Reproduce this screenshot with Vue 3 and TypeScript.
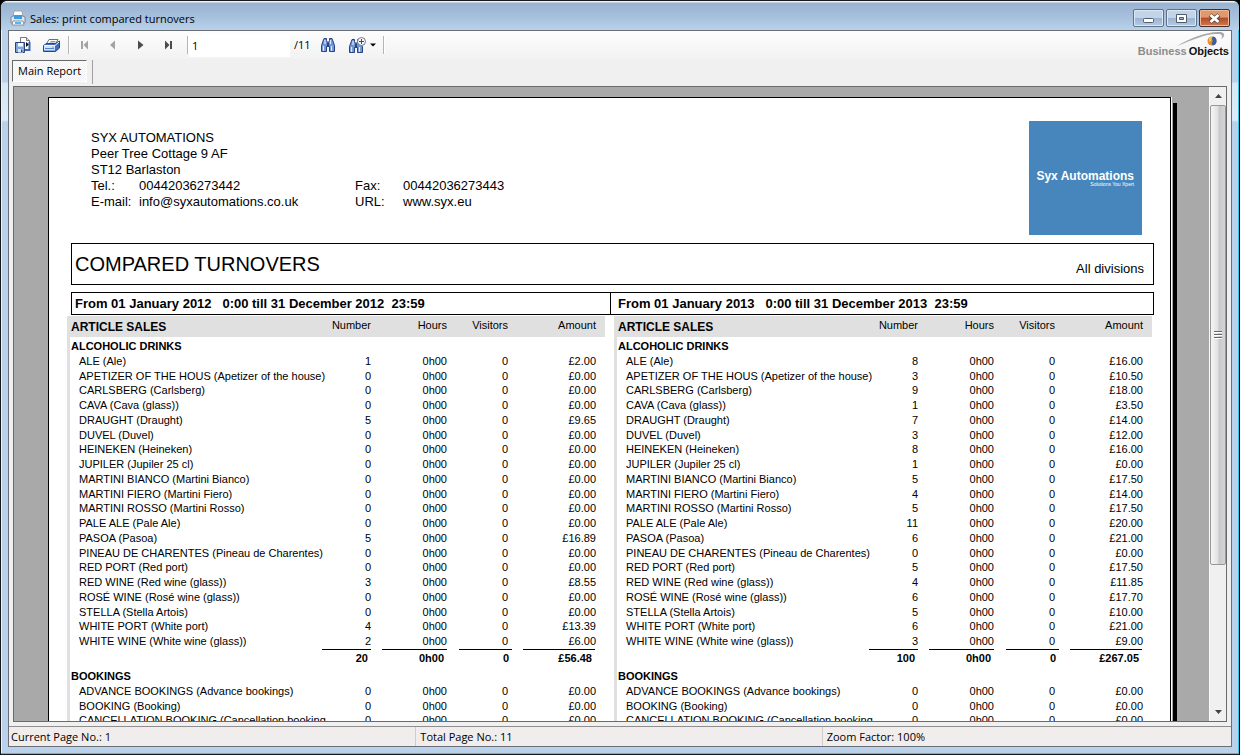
<script setup lang="ts">
import { ref } from 'vue'

interface Row { name: string; number: string; amount: string }
interface Group { title: string; rows: Row[]; total?: { number: string; amount: string } }
interface Period { label: string; groups: Group[] }

const articles: [string, string, string, string, string][] = [
  ['ALE (Ale)', '1', '£2.00', '8', '£16.00'],
  ['APETIZER OF THE HOUS (Apetizer of the house)', '0', '£0.00', '3', '£10.50'],
  ['CARLSBERG (Carlsberg)', '0', '£0.00', '9', '£18.00'],
  ['CAVA (Cava (glass))', '0', '£0.00', '1', '£3.50'],
  ['DRAUGHT (Draught)', '5', '£9.65', '7', '£14.00'],
  ['DUVEL (Duvel)', '0', '£0.00', '3', '£12.00'],
  ['HEINEKEN (Heineken)', '0', '£0.00', '8', '£16.00'],
  ['JUPILER (Jupiler 25 cl)', '0', '£0.00', '1', '£0.00'],
  ['MARTINI BIANCO (Martini Bianco)', '0', '£0.00', '5', '£17.50'],
  ['MARTINI FIERO (Martini Fiero)', '0', '£0.00', '4', '£14.00'],
  ['MARTINI ROSSO (Martini Rosso)', '0', '£0.00', '5', '£17.50'],
  ['PALE ALE (Pale Ale)', '0', '£0.00', '11', '£20.00'],
  ['PASOA (Pasoa)', '5', '£16.89', '6', '£21.00'],
  ['PINEAU DE CHARENTES (Pineau de Charentes)', '0', '£0.00', '0', '£0.00'],
  ['RED PORT (Red port)', '0', '£0.00', '5', '£17.50'],
  ['RED WINE (Red wine (glass))', '3', '£8.55', '4', '£11.85'],
  ['ROSÉ WINE (Rosé wine (glass))', '0', '£0.00', '6', '£17.70'],
  ['STELLA (Stella Artois)', '0', '£0.00', '5', '£10.00'],
  ['WHITE PORT (White port)', '4', '£13.39', '6', '£21.00'],
  ['WHITE WINE (White wine (glass))', '2', '£6.00', '3', '£9.00'],
]
const bookings = [
  'ADVANCE BOOKINGS (Advance bookings)',
  'BOOKING (Booking)',
  'CANCELLATION BOOKING (Cancellation booking',
]

function groupsFor(col: 1 | 3, total: { number: string; amount: string }): Group[] {
  return [
    {
      title: 'ALCOHOLIC DRINKS',
      rows: articles.map((a) => ({ name: a[0], number: a[col], amount: a[col + 1] as string })),
      total,
    },
    { title: 'BOOKINGS', rows: bookings.map((name) => ({ name, number: '0', amount: '£0.00' })) },
  ]
}

const periods: Period[] = [
  {
    label: 'From 01 January 2012   0:00 till 31 December 2012  23:59',
    groups: groupsFor(1, { number: '20', amount: '£56.48' }),
  },
  {
    label: 'From 01 January 2013   0:00 till 31 December 2013  23:59',
    groups: groupsFor(3, { number: '100', amount: '£267.05' }),
  },
]

const page = ref('1')
</script>

<template>
  <div class="window">
    <header class="titlebar">
      <svg class="app-icon" width="16" height="16" viewBox="0 0 16 16">
        <path d="M4 1h8l1 6H3z" fill="#fdfdfd" stroke="#9aa6b3" stroke-width="1" />
        <path d="M1 7l2-1h10l2 1v6H1z" fill="#dfe5ea" stroke="#7d8a97" />
        <path d="M4 5h8v4H4z" fill="#3e9be0" />
        <path d="M3 11h10l1 4H2z" fill="#f7fbff" stroke="#8796a5" />
        <path d="M5 13h6" stroke="#59b4ee" stroke-width="2" />
      </svg>
      <h1>Sales: print compared turnovers</h1>
      <div class="controls">
        <button type="button" aria-label="Minimize">
          <svg width="13" height="13"><rect x="1.5" y="6.5" width="10" height="4" rx="1" fill="#fff" stroke="#4f5c6b" /></svg>
        </button>
        <button type="button" aria-label="Maximize">
          <svg width="13" height="13"><path d="M1.500 2.500h10v8h-10zM4.500 5.500v2h4v-2z" fill="#fff" fill-rule="evenodd" stroke="#4f5c6b" /></svg>
        </button>
        <button type="button" class="close" aria-label="Close">
          <svg width="13" height="13"><path d="M2 3l9 7M11 3l-9 7" stroke="#5b4a4a" stroke-width="4.500" /><path d="M2.500 3l8 7M10.500 3l-8 7" stroke="#fff" stroke-width="2.800" /></svg>
        </button>
      </div>
    </header>

    <main class="client">
      <div class="toolbar">
        <button type="button" class="tool" aria-label="Export report">
          <svg width="16" height="16" viewBox="0 0 16 16">
            <path d="M5.500.5h6l3 3v9h-9z" fill="#fff" stroke="#777" />
            <path d="M11.500.5v3h3" fill="#ddd" stroke="#777" />
            <path d="M11 5l3 2.500-3 2.500z" fill="#111" />
            <path d="M14.500 5v8H9" fill="none" stroke="#3a67b5" stroke-width="2" />
            <path d="M.5 5.500h9v10h-9z" fill="#7ea6dc" stroke="#28447e" />
            <path d="M3 6h5v3.500H3z" fill="#fff" />
            <path d="M3 12h5v3.500H3z" fill="#dfe6f2" /><path d="M6 12.500h1.500V15H6z" fill="#28447e" />
          </svg>
        </button>
        <button type="button" class="tool" aria-label="Print report">
          <svg width="17" height="16" viewBox="0 0 17 16">
            <path d="M6 2.500h9l-3 5H3z" fill="#fff" stroke="#68707c" />
            <path d="M7.500 4.500h5M6.500 6h5" stroke="#8f98a5" />
            <path d="M.5 8.500l3-2h9l4-2.500v7l-4 3.500H.5z" fill="#3a6cc2" stroke="#27458a" />
            <path d="M1 8.500h11v5H1z" fill="#cfe2f8" />
            <path d="M1 8.500h11l4-3.500" stroke="#f3f8ff" fill="none" />
            <path d="M2 11.500h9" stroke="#5286d0" /><path d="M9 10h2" stroke="#e39a2d" />
          </svg>
        </button>
        <span class="sep narrow"></span>
        <button type="button" class="tool" aria-label="First page">
          <svg width="9" height="10"><path d="M1 1h2v8H1zM8 .5v9L3.500 5z" fill="#a3a3a3" /></svg>
        </button>
        <button type="button" class="tool" aria-label="Previous page">
          <svg width="9" height="10"><path d="M7 .5v9L2 5z" fill="#a3a3a3" /></svg>
        </button>
        <button type="button" class="tool" aria-label="Next page">
          <svg width="9" height="10"><path d="M2 .5v9L7.500 5z" fill="#4c4c4c" /></svg>
        </button>
        <button type="button" class="tool" aria-label="Last page">
          <svg width="9" height="10"><path d="M1 .5v9L5.500 5zM6 1h2v8H6z" fill="#4c4c4c" /></svg>
        </button>
        <span class="sep"></span>
        <input v-model="page" class="page-input" type="text" aria-label="Page number" />
        <span class="page-total">/11</span>
        <button type="button" class="tool" aria-label="Find text">
          <svg width="14" height="14" viewBox="0 0 14 14">
            <path d="M3 .5h2.500v2l1 2h1l1-2v-2H11l2.500 7v6H8.500v-5h-3v5h-5v-6z" fill="#6f97d6" stroke="#28417f" />
            <path d="M2.500 8v5M10.500 8v5M4 2v4M9.500 2v4" stroke="#dbe9fb" stroke-width="1.200" />
            <path d="M6 5h2v3H6z" fill="#28417f" />
          </svg>
        </button>
        <button type="button" class="tool zoom" aria-label="Zoom">
          <svg width="18" height="16" viewBox="0 0 18 16">
            <path d="M3 2.500h2.500v2l1 2h1l1-2v-2H10l3.500 7v6H8.500v-5h-3v5h-5v-6z" fill="#6f97d6" stroke="#28417f" />
            <path d="M2.500 10v5M10.500 10v5M4 4v4" stroke="#dbe9fb" stroke-width="1.200" />
            <path d="M6 7h2v3H6z" fill="#28417f" />
            <circle cx="12.500" cy="4.500" r="4" fill="#f7f7fa" stroke="#73798a" />
            <path d="M10 4.500h5M12.500 2v5" stroke="#39497c" />
          </svg>
          <svg width="6" height="4"><path d="M0 .5h6l-3 3z" fill="#000" /></svg>
        </button>
        <span class="sep wide"></span>
        <div class="brand">
          <svg width="52" height="18" viewBox="0 0 52 18">
            <path d="M1 15C14 7 32 0 44 1c6 .5 5 5 1 7 2-3 1-5-3-5C32 2 16 9 1 15z" fill="#a7a9ac" />
            <circle cx="36" cy="10" r="4.500" fill="#e58a2b" />
            <path d="M37 5.600a4.500 4.500 0 0 1 0 8.800c-2-2-1-3 0-4.400-1-1-1.500-3 0-4.400z" fill="#3560a8" />
            <path d="M33 7c1-1 2-1 3-1l-1 4-2 1z" fill="#f6c36a" />
          </svg>
          <p><span>Business</span><strong>Objects</strong></p>
        </div>
      </div>

      <nav class="tabs">
        <button type="button" class="tab">Main Report</button>
        <span class="tab-sep"></span>
      </nav>

      <section class="viewer">
        <div class="canvas">
          <div class="sheet-wrap">
            <article class="sheet">
              <div class="company">
                <address>
                  <p>SYX AUTOMATIONS</p>
                  <p>Peer Tree Cottage  9 AF</p>
                  <p>ST12 Barlaston</p>
                  <dl>
                    <dt>Tel.:</dt><dd>00442036273442</dd><dt>Fax:</dt><dd>00442036273443</dd>
                    <dt>E-mail:</dt><dd>info@syxautomations.co.uk</dd><dt>URL:</dt><dd>www.syx.eu</dd>
                  </dl>
                </address>
                <div class="logo"><strong>Syx Automations</strong><small>Solutions You Xpert</small></div>
              </div>

              <div class="title-box">
                <h2>COMPARED TURNOVERS</h2>
                <span>All divisions</span>
              </div>

              <div class="period-box">
                <h3 v-for="p in periods" :key="p.label">{{ p.label }}</h3>
              </div>

              <div class="columns">
                <table v-for="p in periods" :key="p.label">
                  <colgroup><col /><col class="c-num" /><col class="c-hrs" /><col class="c-vis" /><col class="c-amt" /></colgroup>
                  <thead>
                    <tr>
                      <th scope="col">ARTICLE SALES</th>
                      <th scope="col" class="num">Number</th>
                      <th scope="col" class="hrs">Hours</th>
                      <th scope="col" class="vis">Visitors</th>
                      <th scope="col" class="amt">Amount</th>
                    </tr>
                  </thead>
                  <template v-for="g in p.groups" :key="g.title">
                    <tbody>
                      <tr class="group"><th colspan="5" scope="rowgroup">{{ g.title }}</th></tr>
                    </tbody>
                    <tbody class="rows">
                      <tr v-for="r in g.rows" :key="r.name">
                        <td class="name">{{ r.name }}</td>
                        <td class="num">{{ r.number }}</td>
                        <td class="hrs">0h00</td>
                        <td class="vis">0</td>
                        <td class="amt">{{ r.amount }}</td>
                      </tr>
                    </tbody>
                    <tbody v-if="g.total">
                      <tr class="total">
                        <td></td>
                        <td class="num"><div>{{ g.total.number }}</div></td>
                        <td class="hrs"><div>0h00</div></td>
                        <td class="vis"><div>0</div></td>
                        <td class="amt"><div>{{ g.total.amount }}</div></td>
                      </tr>
                    </tbody>
                  </template>
                </table>
              </div>
            </article>
          </div>
        </div>
        <div class="scrollbar">
          <button type="button" aria-label="Scroll up"><svg width="7" height="4"><path d="M3.500 0L7 4H0z" fill="#444" /></svg></button>
          <div class="track"><div class="thumb"><i></i><i></i><i></i></div></div>
          <button type="button" aria-label="Scroll down"><svg width="7" height="4"><path d="M0 0h7L3.500 4z" fill="#444" /></svg></button>
        </div>
      </section>

      <footer class="status">
        <span>Current Page No.: 1</span>
        <span>Total Page No.: 11</span>
        <span>Zoom Factor: 100%</span>
      </footer>
    </main>
  </div>
</template>

<style>
body { margin: 0; background: #000; }
</style>

<style scoped>
* { box-sizing: border-box; margin: 0; padding: 0; }
svg { display: block; flex: none; }
button { border: 0; background: none; font: inherit; color: inherit; }
.window {
  display: flex; flex-direction: column; height: 100vh; padding: 0 6px 6px;
  border: 1px solid #1a1a1a; border-right-color: #000; border-radius: 7px 7px 0 0;
  background: linear-gradient(#b9d1ea, #b9d1ea 81px, #d6e8f6 82px, #dcecf8 119px, #b9d1ea 121px);
  box-shadow: inset -1px -1px #35c5ea, inset 1px 1px #e9f3fb;
  font: 11px/16px "Open Sans", "Noto Sans", sans-serif; color: #000; overflow: hidden;
}
.titlebar {
  flex: none; display: flex; align-items: center; height: 29px; margin: 0 -6px; padding: 5px 9px 0;
  background: linear-gradient(#e9f3fb 1px, #98b2d0 2px, #a4bedb 14px, #b9d1ea); border-radius: 6px 6px 0 0;
}
.titlebar h1 { flex: 1; margin-left: 4px; padding-top: 2px; font-size: 11px; font-weight: 400; }
.controls { display: flex; gap: 2px; }
.controls button {
  display: grid; place-items: center; width: 31px; height: 18px; border: 1px solid #5f7288; border-radius: 2px;
  box-shadow: inset 0 0 0 1px #dbe8f6; background: linear-gradient(#c3d4e8 50%, #98b2d0 50%, #b6cce4);
}
.controls .close { border-color: #4d2b2b; box-shadow: inset 0 0 0 1px #eeb998; background: linear-gradient(#e0996a 45%, #b3492a 50%, #d07c47); }
.client {
  flex: 1; min-height: 0; display: flex; flex-direction: column; margin: 0 1px 1px;
  border: 1px solid #6a6f75; background: #f0f0f0;
}
.toolbar { flex: none; display: flex; align-items: center; height: 28px; background: linear-gradient(#fdfdfd, #f2f2f2); }
.tool { display: grid; place-items: center; width: 28px; height: 26px; }
.tool.zoom { display: flex; align-items: center; gap: 3px; width: 38px; padding-left: 7px; }
.sep { width: 7px; height: 18px; background: linear-gradient(90deg, #b5b5b5 50%, #fff 50%) right / 2px 100% no-repeat; }
.sep.narrow { width: 5px; }
.sep.wide { background-position: center; }
.page-input { width: 101px; height: 23px; padding: 0 3px; border: 0; background: #fff; font: inherit; }
.page-total { width: 24px; padding-left: 4px; }
.brand { position: relative; align-self: stretch; margin-left: auto; }
.brand svg { position: absolute; right: 3px; top: 0; }
.brand p { display: flex; gap: 2px; padding: 14px 2px 0 0; font: bold 11px/12px "Liberation Sans", Arial, sans-serif; color: #8c8c8c; }
.brand strong { color: #111; }
.tabs { flex: none; display: flex; height: 27px; padding: 1px 3px; }
.tab {
  height: 22px; padding: 0 5px; border: 1px solid; border-color: #6a6a6a #fff #fff #6a6a6a;
  background: repeating-conic-gradient(#fff 0 25%, #f0f0f0 0 50%) 0 0 / 2px 2px;
}
.tab-sep { width: 1px; height: 24px; margin-left: 5px; background: #a0a0a0; }
.viewer {
  flex: 1; min-height: 0; display: flex; margin: 0 4px; border: 1px solid #6a6a6a; background: #a9a9a9; overflow: hidden;
}
.canvas { flex: 1; min-width: 0; padding: 10px 32px 0 34px; overflow: hidden; }
.sheet-wrap {
  padding-right: 6px;
  background: linear-gradient(#000, #000) right 0 top 6px / 4px 100% no-repeat;
}
.sheet {
  padding: 23px 18px 40px; border: 1px solid #000; background: #fff;
  font: 11px/15px "Liberation Sans", Arial, sans-serif; box-shadow: 1px 0 #fff;
}
.company { display: flex; justify-content: space-between; padding: 0 10px 0 24px; height: 122px; }
address { padding-top: 9px; font: 13px/16px "Liberation Sans", Arial, sans-serif; white-space: pre; }
dl { display: grid; grid-template-columns: 48px 216px 48px auto; }
.logo {
  display: flex; flex-direction: column; justify-content: center; align-items: flex-end;
  width: 113px; height: 114px; padding-right: 8px; background: #4686bd; color: #fff; white-space: nowrap;
}
.logo strong { font-size: 12px; line-height: 12px; }
.logo small { font-size: 5px; line-height: 5px; }
.title-box {
  display: flex; justify-content: space-between; height: 42px; margin: 0 -2px 7px 4px; padding: 0 9px 0 3px; border: 1px solid #000;
}
.title-box h2 { font-size: 20px; font-weight: 400; line-height: 41px; }
.title-box span { padding-top: 17px; font-size: 13px; line-height: 16px; }
.period-box { display: grid; grid-template-columns: 538fr 543fr; height: 23px; margin: 0 -2px 1px 4px; border: 1px solid #000; }
.period-box h3 { padding-left: 3px; font-size: 13px; line-height: 21px; white-space: pre; }
.period-box h3 + h3 { padding-left: 7px; border-left: 1px solid #000; }
.columns { display: grid; grid-template-columns: 1fr 1fr; gap: 9px; }
table { width: 100%; table-layout: fixed; border-collapse: separate; border-spacing: 0; border-left: 3px solid #e0e0e0; }
.c-num { width: 60px; }
.c-hrs { width: 77px; }
.c-vis { width: 64px; }
.c-amt { width: 82px; }
thead tr { height: 21px; background: #e0e0e0; }
thead th { font-weight: 400; vertical-align: top; line-height: 19px; }
thead th:first-child { padding: 1px 0 0 1px; font-size: 12px; font-weight: 700; line-height: 20px; text-align: left; }
.group th { height: 17px; padding: 1px 0 0 1px; text-align: left; line-height: 16px; }
.rows tr { height: 15px; }
.rows td { line-height: 14px; vertical-align: top; }
.rows tr:nth-child(4n + 2) { height: 14px; }
.rows .name { padding-left: 9px; white-space: nowrap; }
.num, .hrs, .vis, .amt { text-align: right; }
.num { padding-right: 11px; }
.hrs { padding-right: 12px; }
.vis { padding-right: 15px; }
.amt { padding-right: 9px; }
.total { height: 18px; font-weight: 700; }
.total td { vertical-align: top; }
.total div { height: 18px; padding-right: 3px; border-top: 1px solid #000; line-height: 17px; }
.total .vis { padding-right: 11px; }
.total .amt { padding-right: 10px; }
.scrollbar { flex: none; display: flex; flex-direction: column; width: 17px; background: #f0f0f0; border-left: 1px solid #fafafa; }
.scrollbar button { display: grid; place-items: center; height: 18px; }
.track { flex: 1; }
.thumb {
  display: flex; flex-direction: column; align-items: center; justify-content: center; gap: 1px; height: 77%;
  border: 1px solid #979797; border-radius: 2px; background: linear-gradient(90deg, #f5f5f5, #e3e3e3 45%, #c9c9cb 60%, #d5d5d7);
}
.thumb i { width: 8px; height: 2px; background: #666; border-bottom: 1px solid #fff; }
.status {
  flex: none; display: grid; grid-template-columns: repeat(3, 1fr); height: 20px; margin-top: 4px; padding-right: 3px;
  border-top: 1px solid #8e8e8e; background: #f1eded;
}
.status span { padding: 1px 2px 0; line-height: 18px; }
.status span + span { padding-left: 4px; border-left: 1px solid #d0cccc; }
</style>
